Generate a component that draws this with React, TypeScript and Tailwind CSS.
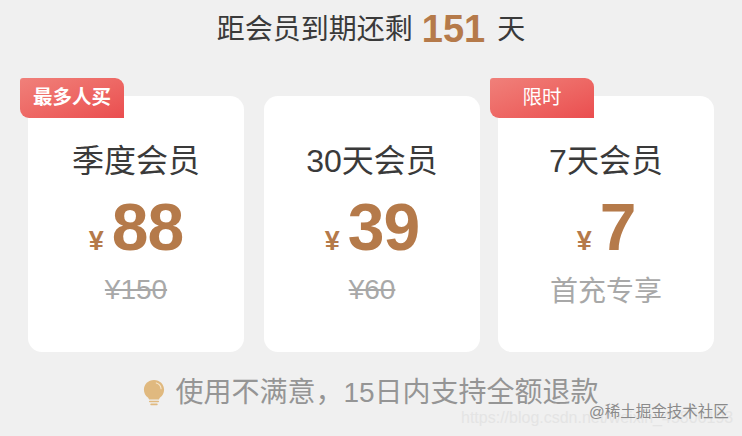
const font = "font-['Liberation_Sans','Noto_Sans_CJK_SC',sans-serif]";

const plans = [
  { name: "季度会员", price: "88", old: "¥150", badge: "最多人买", badgeText: "font-bold" },
  { name: "30天会员", price: "39", old: "¥60" },
  { name: "7天会员", price: "7", note: "首充专享", badge: "限时", badgeText: "font-normal" },
];

function Bulb() {
  return (
    <svg width="22" height="28" viewBox="0 0 24 30" className="shrink-0" preserveAspectRatio="none">
      <path d="M12 1C5.6 1 1 5.600 1 11.400c0 3.600 1.800 6.200 4 8.200 1 .9 1.400 1.600 1.600 2.400h10.800c.2-.8.6-1.500 1.600-2.400 2.200-2 4-4.600 4-8.200C23 5.600 18.400 1 12 1z" fill="#e0b97f" />
      <path d="M14.500 4.200c3 .8 5 3.200 5.200 6.300" fill="none" stroke="#f6e6cc" strokeWidth="1.200" strokeLinecap="round" />
      <rect x="6.500" y="23.300" width="11" height="1.700" rx="0.800" fill="#e0b97f" />
      <rect x="8" y="26.300" width="8" height="1.700" rx="0.800" fill="#e0b97f" />
    </svg>
  );
}

export default function App() {
  return (
    <div className={`${font} relative w-[742px] h-[436px] overflow-hidden bg-[#f0f0f0] flex flex-col items-center`}>
      <div className="h-[60px] flex items-center justify-center text-[#3a3a3a] text-[28px] leading-none">
        <span>距会员到期还剩</span>
        <span className="ml-[9px] mr-[12px] text-[38px] font-bold text-[#b57a4a] relative -top-[1px]">151</span>
        <span>天</span>
      </div>

      <div className="mt-[36px] flex w-full pl-[28px] gap-[18px]">
        {plans.map((p) => (
          <div key={p.name} className="relative w-[216px] h-[256px] bg-white rounded-[14px] flex flex-col items-center first:mr-[2px]">
            {p.badge && (
              <div className={`absolute -left-[8px] -top-[18px] w-[104px] h-[40px] pb-[1px] rounded-tl-[3px] rounded-tr-[9px] rounded-bl-[9px] bg-gradient-to-br from-[#f0807a] to-[#ea4d4f] text-white ${p.badgeText} text-[19.5px] flex items-center justify-center`}>
                {p.badge}
              </div>
            )}
            <div className="mt-[47px] h-[36px] text-[32px] leading-[36px] text-[#3a3a3a]">{p.name}</div>
            <div className="mt-[16px] h-[64px] flex items-baseline text-[#b57a4a] font-bold">
              <span className="text-[27px] mr-[8px]">¥</span>
              <span className="text-[66px] leading-[64px] tracking-[-1px]">{p.price}</span>
            </div>
            {p.old && <div className="mt-[15px] text-[28px] leading-[32px] text-[#a8a8a8] line-through">{p.old}</div>}
            {p.note && <div className="mt-[17px] text-[28px] leading-[32px] text-[#a8a8a8]">{p.note}</div>}
          </div>
        ))}
      </div>

      <div className="mt-[25px] flex items-center gap-[10px] text-[28px] leading-[32px] text-[#959595]">
        <Bulb />
        <span>使用不满意，15日内支持全额退款</span>
      </div>

      <div className="absolute left-[461px] top-[410px] text-[16px] leading-[16px] text-[#e4e4e4] whitespace-nowrap">https://blog.csdn.net/weixin_45806193</div>
      <div className="absolute left-[589px] top-[402px] text-[15.500px] leading-[20px] text-[#8a8a8a] whitespace-nowrap">@稀土掘金技术社区</div>
    </div>
  );
}
